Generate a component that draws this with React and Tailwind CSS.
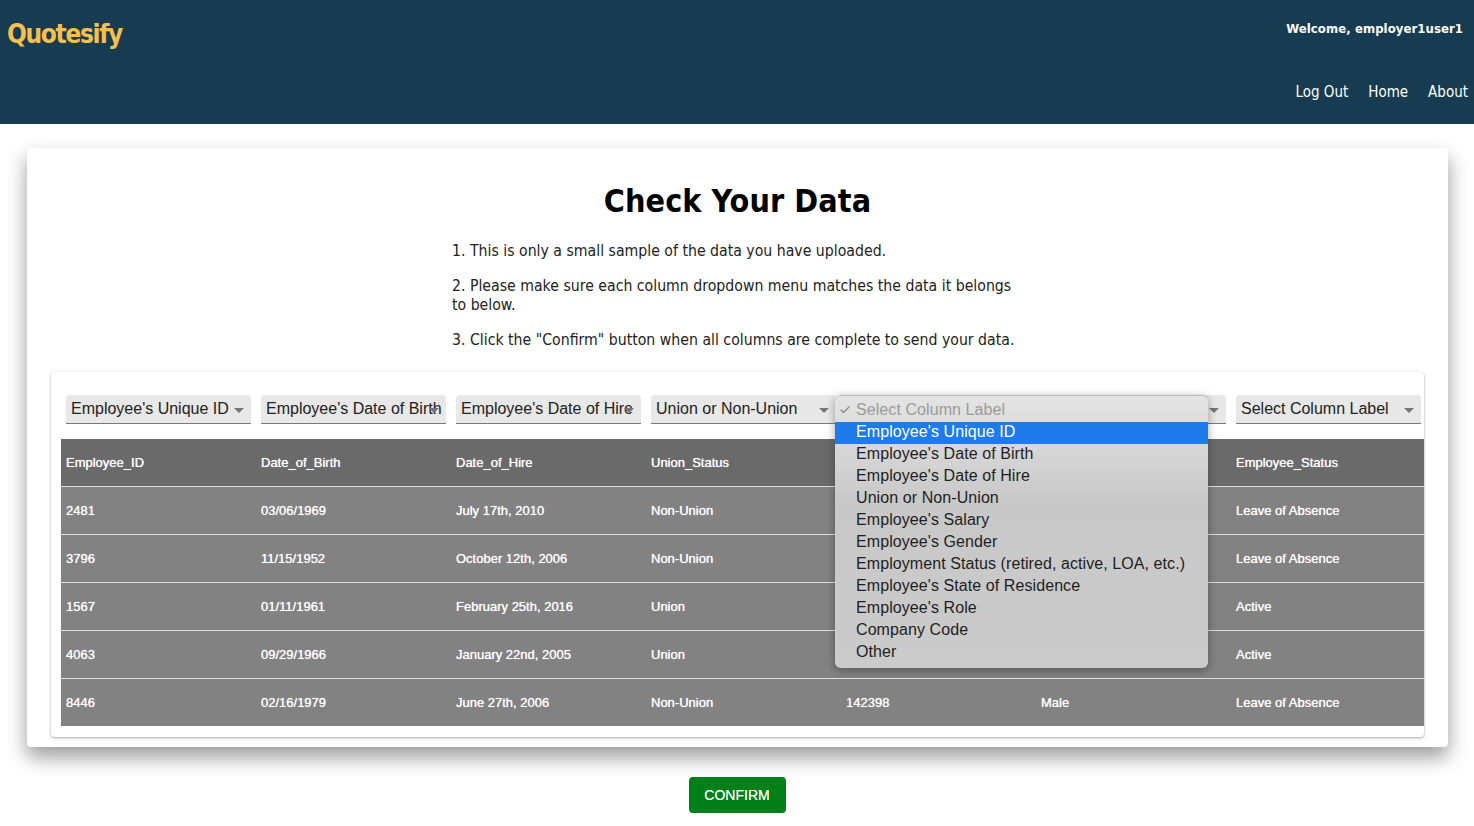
import { Check } from 'lucide-react';

const columnLabels = [
  "Employee's Unique ID",
  "Employee's Date of Birth",
  "Employee's Date of Hire",
  'Union or Non-Union',
  '',
  '',
  'Select Column Label',
];

const options = [
  "Employee's Unique ID",
  "Employee's Date of Birth",
  "Employee's Date of Hire",
  'Union or Non-Union',
  "Employee's Salary",
  "Employee's Gender",
  'Employment Status (retired, active, LOA, etc.)',
  "Employee's State of Residence",
  "Employee's Role",
  'Company Code',
  'Other',
];

const headers = ['Employee_ID', 'Date_of_Birth', 'Date_of_Hire', 'Union_Status', '', '', 'Employee_Status'];

const rows = [
  ['2481', '03/06/1969', 'July 17th, 2010', 'Non-Union', '', '', 'Leave of Absence'],
  ['3796', '11/15/1952', 'October 12th, 2006', 'Non-Union', '', '', 'Leave of Absence'],
  ['1567', '01/11/1961', 'February 25th, 2016', 'Union', '', '', 'Active'],
  ['4063', '09/29/1966', 'January 22nd, 2005', 'Union', '', '', 'Active'],
  ['8446', '02/16/1979', 'June 27th, 2006', 'Non-Union', '142398', 'Male', 'Leave of Absence'],
];

function ColumnSelect({ label }) {
  return (
    <div className="relative ml-[5px] flex h-[29px] w-[185px] items-center overflow-hidden whitespace-nowrap rounded-t-[4px] border-b border-[#7b7b7b] bg-[#e8e8e8] pl-[5px] text-[16px] text-[#222]">
      {label}
      <span className="absolute right-[7px] top-[13px] h-0 w-0 border-x-[5px] border-t-[5px] border-x-transparent border-t-[#757575]" />
    </div>
  );
}

function Row({ cells, dark, last }) {
  return (
    <div className={`grid grid-cols-[repeat(7,195px)] items-center overflow-hidden text-[13px] font-medium text-white [text-shadow:0_0_0.8px_rgba(255,255,255,0.9)] ${dark ? 'bg-[#6a6a6a]' : 'bg-[#828282]'} ${last ? 'h-[47px]' : 'h-12 border-b border-[#e0e0e0]'}`}>
      {cells.map((cell, i) => (
        <div key={i} className="pl-[5px]">{cell}</div>
      ))}
    </div>
  );
}

export default function App() {
  return (
    <div className="min-h-[826px] overflow-hidden bg-white font-['Liberation_Sans',sans-serif]">
      <header className="flex h-[124px] flex-col bg-[#173b50] text-white">
        <div className="flex items-start justify-between">
          <div className="pl-[7px] pt-[17px] font-['DejaVu_Sans',sans-serif] text-[26px] font-bold leading-[34px] tracking-[-1.35px] text-[#f5c04f] [font-stretch:condensed]">
            Quotesify
          </div>
          <div className="pr-[11px] pt-[21px] font-['DejaVu_Sans',sans-serif] text-[13px] font-bold leading-4 tracking-[0.07px] [font-stretch:condensed]">
            Welcome, employer1user1
          </div>
        </div>
        <nav className="mt-[31px] flex justify-end gap-5 pr-[6px] font-['DejaVu_Sans',sans-serif] text-[15px] leading-5 [font-stretch:condensed]">
          <span>Log Out</span>
          <span>Home</span>
          <span>About</span>
        </nav>
      </header>

      <main className="ml-[27px] mr-[26px] mt-6 h-[599px] rounded-[4px] bg-white pt-[33px] shadow-[0_10px_20px_rgba(0,0,0,0.4)]">
        <h1 className="text-center font-['DejaVu_Sans',sans-serif] text-[32px] font-bold leading-10 tracking-[0.07px] text-black [font-stretch:condensed]">
          Check Your Data
        </h1>
        <div className="ml-[425px] mt-[20px] w-[570px] font-['DejaVu_Sans',sans-serif] text-[15.7px] leading-[19px] text-[#222] [font-stretch:condensed]">
          <p>1. This is only a small sample of the data you have uploaded.</p>
          <p className="mt-4">2. Please make sure each column dropdown menu matches the data it belongs to below.</p>
          <p className="mt-4 whitespace-nowrap">3. Click the "Confirm" button when all columns are complete to send your data.</p>
        </div>

        <section className="relative mx-6 mt-[23px] h-[365px] rounded-[4px] bg-white pl-[10px] pt-[23px] shadow-[0_1px_3px_rgba(0,0,0,0.35)]">
          <div className="grid grid-cols-[repeat(7,195px)]">
            {columnLabels.map((label, i) => (
              <ColumnSelect key={i} label={label} />
            ))}
          </div>
          <div className="mt-[15px]">
            <Row cells={headers} dark />
            {rows.map((row, i) => (
              <Row key={row[0]} cells={row} last={i === rows.length - 1} />
            ))}
          </div>

          <div className="absolute left-[784px] top-[23px] h-[273px] w-[373px] rounded-[6px] border-t border-[#b8b8b8] bg-gradient-to-b from-[#e4e4e4] via-[#c8c8c8] via-40% to-[#cbcbcb] pt-[4px] text-[16px] leading-[20px] tracking-[0.08px] text-[#1e1e1e] shadow-[0_2px_10px_rgba(0,0,0,0.35)]">
            <div className="flex h-[22px] items-center pb-[2px] text-[#9b9b9b]">
              <Check size={12} strokeWidth={2.5} className="ml-[4px] mr-[5px] text-[#858585]" />
              Select Column Label
            </div>
            {options.map((option, i) => (
              <div key={option} className={`h-[22px] whitespace-nowrap pl-[21px] ${i === 0 ? 'bg-[#1d7bec] text-white' : ''}`}>
                {option}
              </div>
            ))}
          </div>
        </section>
      </main>

      <div className="mt-[30px] flex justify-center">
        <button className="h-9 w-[97px] rounded-[4px] bg-[#008018] text-[14px] font-medium uppercase text-white [text-shadow:0_0_0.6px_rgba(255,255,255,0.8)]">
          Confirm
        </button>
      </div>
    </div>
  );
}
